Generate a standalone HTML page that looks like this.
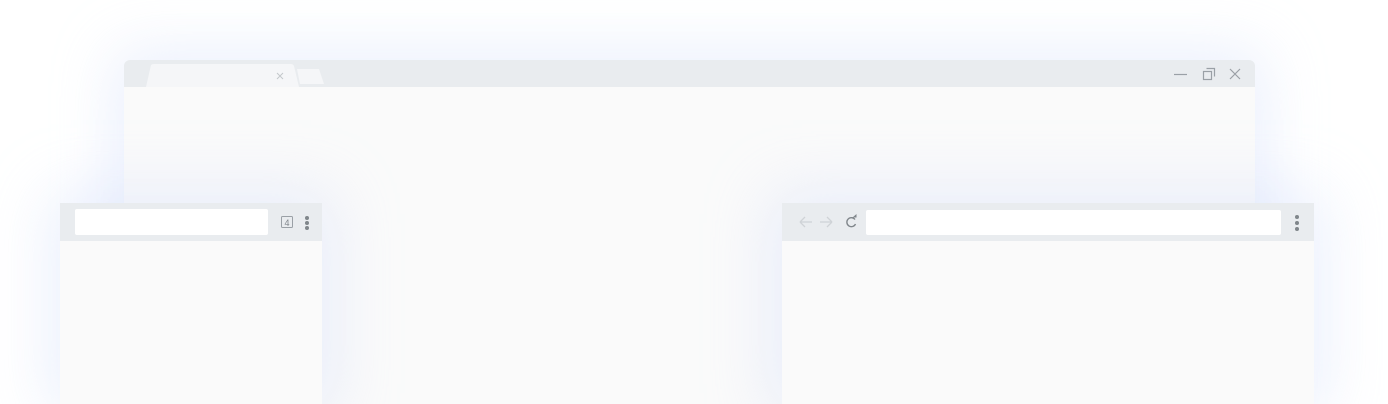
<!DOCTYPE html>
<html><head><style>
html,body{margin:0;padding:0;width:1388px;height:404px;overflow:hidden;background:#fff;position:relative}
.win{position:absolute;background:#fafafa;box-shadow:0 0 60px 10px rgba(205,218,250,0.4)}
.bar{position:absolute;left:0;right:0;top:0;background:#e9ecef}
.inp{position:absolute;background:#fff;border-radius:2px}
.dot{position:absolute;width:4px;height:4px;border-radius:2px;background:#80868b}
</style></head><body>
<div class="win" style="left:124px;top:60px;width:1131px;height:344px;border-radius:6px 6px 0 0">
 <div class="bar" style="height:27px;border-radius:6px 6px 0 0"></div>
 <svg style="position:absolute;left:0;top:0" width="1131" height="30">
  <path d="M22 27 L27 5 Q28 4 30 4 L167 4 Q169 4 170 6 L175 27 Z" fill="#f5f6f8"/>
  <path d="M153 13 l6 6 M159 13 l-6 6" stroke="#c4c8cc" stroke-width="1"/>
  <path d="M176 24 L173 9 L195 9 L200 24 Z" fill="#f5f6f8"/>
  <path d="M1050 14.5 h13" stroke="#9aa0a6" stroke-width="1.2"/>
  <rect x="1079.5" y="11.5" width="8" height="8" fill="none" stroke="#9aa0a6" stroke-width="1.2"/>
  <path d="M1082.5 8.5 h8 v8" fill="none" stroke="#9aa0a6" stroke-width="1.2"/>
  <path d="M1106 9 l10 10 M1116 9 l-10 10" stroke="#9aa0a6" stroke-width="1.2"/>
 </svg>
</div>
<div class="win" style="left:60px;top:203px;width:262px;height:201px">
 <div class="bar" style="height:38px"></div>
 <div class="inp" style="left:15px;top:6px;width:193px;height:26px"></div>
 <svg style="position:absolute;left:220px;top:12px" width="14" height="14">
  <rect x="1.5" y="1.5" width="11" height="11" rx="1" fill="none" stroke="#9aa0a6" stroke-width="1"/>
  <text x="7" y="11" font-family="Liberation Sans" font-size="9" fill="#80868b" text-anchor="middle">4</text>
 </svg>
 <div class="dot" style="left:245px;top:13px"></div>
 <div class="dot" style="left:245px;top:18px"></div>
 <div class="dot" style="left:245px;top:23px"></div>
</div>
<div class="win" style="left:782px;top:203px;width:532px;height:201px">
 <div class="bar" style="height:38px"></div>
 <svg style="position:absolute;left:0;top:0" width="80" height="38">
  <path d="M18 19 h12 M18 19 l5 -5 M18 19 l5 5" stroke="#cfd3d7" stroke-width="1.3" fill="none"/>
  <path d="M50 19 h-12 M50 19 l-5 -5 M50 19 l-5 5" stroke="#cfd3d7" stroke-width="1.3" fill="none"/>
  <path d="M73 16.5 A4.5 4.5 0 1 0 73.5 21" stroke="#80868b" stroke-width="1.4" fill="none"/>
  <path d="M70.5 14.5 h4 v-3.5 z" fill="#80868b"/>
 </svg>
 <div class="inp" style="left:84px;top:7px;width:415px;height:25px"></div>
 <div class="dot" style="left:513px;top:12px"></div>
 <div class="dot" style="left:513px;top:18px"></div>
 <div class="dot" style="left:513px;top:24px"></div>
</div>
</body></html>
